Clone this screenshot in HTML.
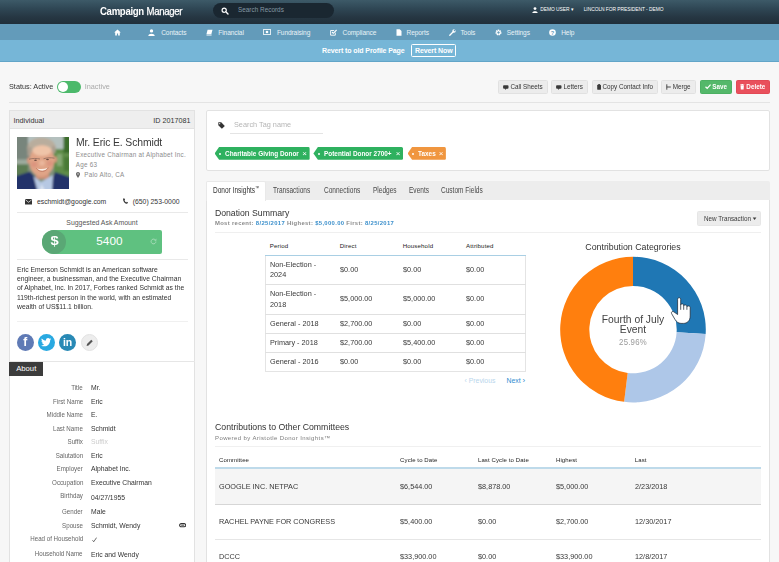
<!DOCTYPE html>
<html>
<head>
<meta charset="utf-8">
<style>
*{box-sizing:border-box;margin:0;padding:0}
html,body{width:779px;height:562px;overflow:hidden;background:#f7f7f7;font-family:"Liberation Sans",sans-serif;color:#333}
.abs{position:absolute}
#top{position:absolute;left:0;top:0;width:779px;height:24px;background:linear-gradient(#3d5a68,#2f4755 35%,#263743 70%,#202e39)}
#nav{position:absolute;left:0;top:24px;width:779px;height:16px;background:#639bba}
#sub{position:absolute;left:0;top:40px;width:779px;height:22px;background:#76b6d7;border-bottom:1px solid #62a5c8}
.t{position:absolute;white-space:nowrap;line-height:1}
#top .t,#nav .t,#sub .t{color:#fff}
#nav .t{font-size:6.6px;top:5.8px;color:#e9f2f7;letter-spacing:-0.1px}
.btn{position:absolute;top:80px;height:13.5px;border:1px solid #e1e1e1;background:#ececec;border-radius:1.5px;font-size:6.3px;line-height:11.5px;color:#333;white-space:nowrap;text-align:center}
.panel{position:absolute;background:#fff;border:1px solid #e2e2e2;border-radius:2px}
.hr{position:absolute;height:1px;background:#e9e9e9}
.lab{position:absolute;right:696px;font-size:6.8px;color:#666;white-space:nowrap;line-height:1;transform-origin:100% 50%;transform:scaleX(0.91)}
.val{position:absolute;left:91.4px;font-size:7.5px;color:#333;white-space:nowrap;line-height:1;transform-origin:0 50%;transform:scaleX(0.905)}
.tab{position:absolute;top:186.3px;font-size:9px;color:#4a4a4a;white-space:nowrap;line-height:1;transform-origin:0 50%;transform:scaleX(0.726)}
.th{position:absolute;font-size:5.6px;color:#222;white-space:nowrap;line-height:1;letter-spacing:0.15px}
.td{position:absolute;font-size:8.1px;color:#383838;white-space:nowrap;line-height:1;transform-origin:0 50%;transform:scaleX(0.90)}
.tag{position:absolute;top:147px;height:12.8px;color:#fff;font-weight:bold;font-size:7px;line-height:13.2px;white-space:nowrap}
</style>
</head>
<body>
<div id="w" style="position:absolute;left:0;top:0;width:779px;height:562px;filter:blur(0.32px)">
<div id="top">
  <div class="t" style="left:100px;top:7px;font-size:10.4px;font-weight:bold;letter-spacing:-0.35px;transform-origin:0 50%;transform:scaleX(0.925)">Campaign <span style="font-weight:normal;margin-left:0.3px;-webkit-text-stroke:0.25px #fff">Manager</span></div>
  <div class="abs" style="left:212.5px;top:3px;width:121px;height:14.5px;border-radius:8px;background:#1a2731"></div>
  <svg class="abs" style="left:220.800px;top:6.500px" width="8" height="8" viewBox="0 0 8 8"><circle cx="3.2" cy="3.2" r="2.1" fill="none" stroke="#fff" stroke-width="1.2"/><path d="M4.8 4.8 L7 7" stroke="#fff" stroke-width="1.4" stroke-linecap="round"/></svg>
  <div class="t" style="left:238px;top:7.3px;font-size:6.4px;color:#8597a3">Search Records</div>
  <svg class="abs" style="left:532px;top:7px" width="6" height="6" viewBox="0 0 6 6"><circle cx="3" cy="1.6" r="1.4" fill="#fff"/><path d="M0.3 6 C0.3 3.6 5.7 3.6 5.7 6Z" fill="#fff"/></svg>
  <div class="t" style="left:540.3px;top:8.3px;font-size:4.9px;letter-spacing:-0.05px">DEMO USER ▾</div>
  <div class="t" style="left:583.7px;top:8.3px;font-size:4.9px;letter-spacing:-0.05px">LINCOLN FOR PRESIDENT - DEMO</div>
</div>
<div id="nav">
  <svg class="abs" style="left:113.5px;top:4.5px" width="7" height="7" viewBox="0 0 7 7"><path d="M3.5 0.6 L0.2 3.6 H1.2 V6.5 H2.9 V4.5 H4.1 V6.5 H5.8 V3.6 H6.8 Z" fill="#fff"/></svg>
  <svg class="abs" style="left:148px;top:4.5px" width="7" height="7" viewBox="0 0 7 7"><circle cx="3.5" cy="1.9" r="1.7" fill="#fff"/><path d="M0.3 7 C0.3 3.9 6.7 3.9 6.7 7Z" fill="#fff"/></svg>
  <div class="t" style="left:161.2px">Contacts</div>
  <svg class="abs" style="left:206px;top:4.5px" width="7" height="7" viewBox="0 0 7 7"><path d="M1.6 0.8 H6.5 L5.4 5 H0.5 Z M0.5 5.6 H5.6 V6.4 H0.5Z" fill="#fff"/></svg>
  <div class="t" style="left:218.3px">Financial</div>
  <svg class="abs" style="left:263px;top:5px" width="8" height="6" viewBox="0 0 8 6"><rect x="0.4" y="0.6" width="7.2" height="4.8" fill="none" stroke="#fff" stroke-width="0.8"/><circle cx="4" cy="3" r="1.3" fill="#fff"/></svg>
  <div class="t" style="left:276.9px">Fundraising</div>
  <svg class="abs" style="left:330px;top:4.5px" width="7" height="7" viewBox="0 0 7 7"><path d="M5.3 3.6 V6.2 H0.6 V1.5 H4.2" fill="none" stroke="#fff" stroke-width="0.9"/><path d="M2 3 L3.3 4.3 L6.6 1" fill="none" stroke="#fff" stroke-width="1.1"/></svg>
  <div class="t" style="left:342.5px">Compliance</div>
  <svg class="abs" style="left:396px;top:4.5px" width="6" height="7" viewBox="0 0 6 7"><path d="M0.5 0.3 H3.7 L5.5 2.1 V6.7 H0.5 Z" fill="#fff"/></svg>
  <div class="t" style="left:406.5px">Reports</div>
  <svg class="abs" style="left:448.5px;top:4.5px" width="7" height="7" viewBox="0 0 7 7"><path d="M0.8 6.2 L4 3" stroke="#fff" stroke-width="1.3" stroke-linecap="round"/><circle cx="5" cy="2" r="1.7" fill="#fff"/><path d="M5 2 L7 0" stroke="#639bba" stroke-width="1.1"/></svg>
  <div class="t" style="left:460.4px">Tools</div>
  <svg class="abs" style="left:495px;top:4.5px" width="7" height="7" viewBox="0 0 7 7"><circle cx="3.5" cy="3.5" r="2.2" fill="none" stroke="#fff" stroke-width="1.6" stroke-dasharray="1.2 0.55"/><circle cx="3.5" cy="3.5" r="1.7" fill="none" stroke="#fff" stroke-width="1"/></svg>
  <div class="t" style="left:506.8px">Settings</div>
  <svg class="abs" style="left:549px;top:4.5px" width="7" height="7" viewBox="0 0 7 7"><circle cx="3.5" cy="3.5" r="3.3" fill="#fff"/><text x="3.5" y="5.6" font-size="5.6" font-weight="bold" text-anchor="middle" fill="#639bba" font-family="Liberation Sans">?</text></svg>
  <div class="t" style="left:561.2px">Help</div>
</div>
<div id="sub">
  <div class="t" style="left:322px;top:7px;font-size:7px;font-weight:bold;letter-spacing:-0.1px">Revert to old Profile Page</div>
  <div class="abs" style="left:411px;top:4.4px;width:45px;height:13px;border:1px solid #fff;border-radius:1.5px"></div>
  <div class="t" style="left:415px;top:7px;font-size:7px;font-weight:bold;letter-spacing:-0.1px">Revert Now</div>
</div>

<!-- status row -->
<div class="t" style="left:9px;top:83.3px;font-size:7.3px;color:#333">Status: Active</div>
<div class="abs" style="left:56.5px;top:81px;width:24.6px;height:12.4px;border-radius:7px;background:#4cb96b"></div>
<div class="abs" style="left:57.8px;top:82.2px;width:10px;height:10px;border-radius:5px;background:#fff"></div>
<div class="t" style="left:84.7px;top:83.3px;font-size:7.3px;color:#aaa">Inactive</div>
<div class="hr" style="left:9px;top:102px;width:761px;background:#e4e4e4"></div>

<!-- action buttons -->
<div class="btn" style="left:498.2px;width:49.7px"><svg width="5.6" height="5" viewBox="0 0 5.600 5" style="vertical-align:-0.6px;margin-right:1.6px"><path d="M1 0.2 H4.6 C5.2 0.2 5.5 0.6 5.5 1.100 V2.800 C5.5 3.300 5.2 3.700 4.600 3.700 H3.400 L2.200 4.900 V3.700 H1 C0.400 3.700 0.100 3.300 0.100 2.800 V1.100 C0.100 0.600 0.400 0.200 1 0.200Z" fill="#3a3a3a"/></svg>Call Sheets</div>
<div class="btn" style="left:551.2px;width:36.8px"><svg width="5.6" height="5" viewBox="0 0 5.600 5" style="vertical-align:-0.6px;margin-right:1.6px"><path d="M1 0.2 H4.6 C5.2 0.2 5.5 0.6 5.5 1.100 V2.800 C5.5 3.300 5.2 3.700 4.600 3.700 H3.400 L2.200 4.900 V3.700 H1 C0.400 3.700 0.100 3.300 0.100 2.800 V1.100 C0.100 0.600 0.400 0.200 1 0.200Z" fill="#3a3a3a"/></svg>Letters</div>
<div class="btn" style="left:592px;width:65.700px"><svg width="4.2" height="6" viewBox="0 0 4.200 6" style="vertical-align:-0.9px;margin-right:1.600px"><rect x="0.200" y="0.700" width="3.800" height="5.100" rx="0.500" fill="#3a3a3a"/><rect x="1.200" y="0" width="1.800" height="1.400" rx="0.400" fill="#3a3a3a"/></svg>Copy Contact Info</div>
<div class="btn" style="left:661px;width:35px"><svg width="5" height="6" viewBox="0 0 5 6" style="vertical-align:-0.9px;margin-right:1.4px"><path d="M0.800 0.300 V5.700 M0.800 3 H4.800" stroke="#3a3a3a" stroke-width="0.9" fill="none"/></svg>Merge</div>
<div class="btn" style="left:700px;width:32px;background:#54b86a;border-color:#4cb062;color:#fff;font-weight:bold"><svg width="6" height="5.2" viewBox="0 0 6 5.200" style="vertical-align:-0.5px;margin-right:1.4px"><path d="M0.500 2.800 L2.200 4.500 L5.600 0.600" stroke="#fff" stroke-width="1.200" fill="none"/></svg>Save</div>
<div class="btn" style="left:735.6px;width:34.4px;background:#e9505c;border-color:#e24955;color:#fff;font-weight:bold"><svg width="4.4" height="5.6" viewBox="0 0 4.400 5.600" style="vertical-align:-0.7px;margin-right:1.6px"><path d="M0.500 1.300 H3.900 L3.600 5.500 H0.800Z M0.100 0.500 H4.300 V1 H0.100Z M1.500 0 H2.900 V0.500 H1.500Z" fill="#fff"/></svg>Delete</div>

<!-- left panel -->
<div class="panel" style="left:9px;top:110px;width:186px;height:470px;border-radius:0"></div>
<div class="abs" style="left:9px;top:110px;width:186px;height:19px;background:#eeeeee;border:1px solid #e2e2e2"></div>
<div class="t" style="left:13.5px;top:116.5px;font-size:7.25px;color:#333">Individual</div>
<div class="t" style="right:588.5px;top:116.5px;font-size:7.2px;color:#333">ID 2017081</div>

<!-- photo -->
<svg class="abs" style="left:17px;top:137px" width="52" height="52" viewBox="0 0 52 52">
  <defs><filter id="bl" x="-10%" y="-10%" width="120%" height="120%"><feGaussianBlur stdDeviation="0.9"/></filter><filter id="bl2"><feGaussianBlur stdDeviation="0.5"/></filter><clipPath id="cp"><rect width="52" height="52"/></clipPath></defs>
  <g clip-path="url(#cp)"><g filter="url(#bl)">
  <rect x="-4" y="-4" width="60" height="60" fill="#7f917a"/>
  <rect x="-4" y="-4" width="17" height="27" fill="#78857c"/>
  <rect x="11" y="-4" width="37" height="19" fill="#b4c0be"/>
  <rect x="37" y="12" width="20" height="28" fill="#5f8c48"/>
  <rect x="46.500" y="-4" width="12" height="20" fill="#3a6c29"/>
  <rect x="40" y="17" width="5" height="12" fill="#86a873"/>
  <rect x="47" y="20" width="6" height="14" fill="#4a7a36"/>
  <rect x="-4" y="22.500" width="15" height="5" fill="#9dab9e"/>
  <rect x="-4" y="27.500" width="15" height="12" fill="#5b7b52"/>
  <ellipse cx="24.500" cy="11" rx="14.200" ry="10.500" fill="#b9ad9d"/>
  <rect x="10.500" y="10" width="4" height="9" fill="#ab9e8f"/>
  <rect x="35" y="9" width="3.500" height="7" fill="#ab9e8f"/>
  <rect x="19" y="32" width="13" height="10" fill="#cf9277"/>
  <ellipse cx="11.800" cy="23.500" rx="1.800" ry="3.300" fill="#d4957b"/>
  <ellipse cx="38.200" cy="22.500" rx="1.800" ry="3.300" fill="#d4957b"/>
  <ellipse cx="24.800" cy="24" rx="12.500" ry="15.500" fill="#e0a487" transform="rotate(4 24.800 24)"/>
  <ellipse cx="25" cy="13.500" rx="9.500" ry="5.200" fill="#efc4a8"/>
  <ellipse cx="17" cy="27.500" rx="3.200" ry="3" fill="#dc957f"/>
  <ellipse cx="33" cy="26.500" rx="3.200" ry="3" fill="#dc957f"/>
  <ellipse cx="25" cy="26" rx="2.600" ry="2.800" fill="#eab79c"/>
  <path d="M-4 40 L13 34.500 L21 43 L27 56 H-4Z" fill="#21336a"/>
  <path d="M56 41 L38 35 L34 45 L31 56 H56Z" fill="#21336a"/>
  <path d="M16.500 39 L24 45 L36 38 L35 56 H21Z" fill="#b6c8e3"/>
  <path d="M22 56 L24.500 47 L29 56Z" fill="#dbe3f0"/>
  </g>
  <g filter="url(#bl2)">
  <path d="M12 22.200 C16 21.200 19.500 21.300 23 22 M26.500 21.800 C30 20.600 34 20.500 37.500 21.200" stroke="#8e6b5d" stroke-width="0.800" fill="none"/>
  <ellipse cx="18.500" cy="23.200" rx="1.400" ry="0.700" fill="#6d4d42"/>
  <ellipse cx="30.500" cy="22.500" rx="1.400" ry="0.700" fill="#6d4d42"/>
  <path d="M20 31.500 C22.500 34.500 28 34.500 30.800 31 C27 32.200 23.500 32.400 20 31.500Z" fill="#faeee6"/>
  <path d="M19.300 31.200 C22.300 35.600 28.500 35.500 31.400 30.600" stroke="#b8705d" stroke-width="0.700" fill="none"/>
  </g></g>
</svg>
<div class="t" style="left:75.6px;top:137.2px;font-size:10.9px;color:#3a3a3a;letter-spacing:-0.13px;transform-origin:0 50%;transform:scaleX(0.955)">Mr. Eric E. Schmidt</div>
<div class="t" style="left:75.7px;top:151.9px;font-size:6.3px;color:#8c8c8c;letter-spacing:0.25px">Executive Chairman at Alphabet Inc.</div>
<div class="t" style="left:75.7px;top:162px;font-size:6.3px;color:#8c8c8c;letter-spacing:0.25px">Age 63</div>
<svg class="abs" style="left:76.3px;top:171.8px" width="4" height="6" viewBox="0 0 4 6"><path d="M2 0 C0.8 0 0 0.9 0 2 C0 3.3 2 6 2 6 C2 6 4 3.3 4 2 C4 0.9 3.2 0 2 0Z" fill="#666"/><circle cx="2" cy="1.9" r="0.7" fill="#fff"/></svg>
<div class="t" style="left:84.2px;top:172px;font-size:6.3px;color:#8c8c8c;letter-spacing:0.25px">Palo Alto, CA</div>

<svg class="abs" style="left:25.2px;top:199px" width="7.2" height="5.6" viewBox="0 0 7.2 5.6"><rect width="7.2" height="5.6" rx="0.6" fill="#333"/><path d="M0.4 0.7 L3.6 3.3 L6.8 0.7" stroke="#fff" stroke-width="0.7" fill="none"/></svg>
<div class="t" style="left:37px;top:199px;font-size:6.8px;color:#333">eschmidt@google.com</div>
<svg class="abs" style="left:123px;top:198.4px" width="5" height="6" viewBox="0 0 5 6"><path d="M1.2 0.3 L2.1 1.8 L1.5 2.5 C1.9 3.4 2.5 4 3.3 4.4 L3.9 3.7 L5 4.6 C4.6 5.8 3.6 6 2.6 5.5 C1.2 4.8 0.1 3 0.1 1.6 C0.1 0.8 0.5 0.3 1.2 0.3Z" fill="#333"/></svg>
<div class="t" style="left:132.7px;top:199px;font-size:6.85px;color:#333">(650) 253-0000</div>
<div class="hr" style="left:17px;top:212.3px;width:171px"></div>
<div class="t" style="left:9px;width:186px;text-align:center;top:220.1px;font-size:6.9px;color:#555">Suggested Ask Amount</div>
<div class="abs" style="left:42.4px;top:230.1px;width:119.6px;height:23.7px;background:#5fc180;border-radius:12px 2px 2px 12px"></div>
<div class="abs" style="left:42.3px;top:230px;width:23.8px;height:23.8px;background:#5aa775;border-radius:12px"></div>
<div class="t" style="left:42.6px;width:23.4px;text-align:center;top:235.3px;font-size:12.8px;font-weight:bold;color:#fff;transform:scaleX(1.15)">$</div>
<div class="t" style="left:96.3px;top:236.3px;font-size:11.8px;color:#fff">5400</div>
<svg class="abs" style="left:150px;top:238.3px" width="7" height="7" viewBox="0 0 7 7"><path d="M5.9 3.5 A2.4 2.4 0 1 1 5.2 1.8" fill="none" stroke="#a5dcb7" stroke-width="1"/><path d="M6.4 0.6 V2.8 H4.2Z" fill="#a5dcb7"/></svg>
<div class="hr" style="left:17px;top:259.3px;width:171px"></div>
<div class="abs" style="left:17.2px;top:264.800px;width:200px;font-size:7.45px;line-height:9.25px;color:#333;transform-origin:0 50%;transform:scaleX(0.911)">Eric Emerson Schmidt is an American software<br>engineer, a businessman, and the Executive Chairman<br>of Alphabet, Inc. In 2017, Forbes ranked Schmidt as the<br>119th-richest person in the world, with an estimated<br>wealth of US$11.1 billion.</div>
<div class="hr" style="left:17px;top:321.3px;width:171px;background:#f0f0f0"></div>
<!-- social -->
<div class="abs" style="left:17px;top:333.9px;width:16.7px;height:16.7px;border-radius:9px;background:#5f7ab5"></div>
<div class="t" style="left:17px;width:16.7px;text-align:center;top:336.3px;font-size:12px;font-weight:bold;color:#fff">f</div>
<div class="abs" style="left:38px;top:333.9px;width:16.7px;height:16.7px;border-radius:9px;background:#29a9e1"></div>
<svg class="abs" style="left:41.2px;top:338px" width="10.4" height="8.6" viewBox="0 0 24 20"><path d="M23.6 2.4c-.9.4-1.8.6-2.8.8 1-.6 1.800-1.600 2.100-2.700-.9.600-2 1-3.100 1.200C18.900.7 17.700.1 16.300.1c-2.700 0-4.800 2.200-4.800 4.800 0 .4 0 .800.100 1.100C7.600 5.800 4 3.900 1.700.9c-.4.700-.7 1.600-.7 2.500 0 1.700.9 3.200 2.200 4-.800 0-1.600-.2-2.200-.6v.1c0 2.400 1.700 4.300 3.900 4.800-.4.100-.8.200-1.300.2-.3 0-.6 0-.9-.1.600 1.900 2.400 3.300 4.500 3.400-1.700 1.300-3.800 2.100-6 2.100-.4 0-.800 0-1.200-.1 2.200 1.400 4.700 2.200 7.400 2.200 8.900 0 13.800-7.400 13.800-13.800v-.6c.9-.7 1.700-1.600 2.400-2.600z" fill="#fff"/></svg>
<div class="abs" style="left:59px;top:333.9px;width:16.9px;height:16.9px;border-radius:9px;background:#2889b5"></div>
<div class="t" style="left:59px;width:16.9px;text-align:center;top:336.800px;font-size:10.5px;font-weight:bold;color:#fff;letter-spacing:-0.2px">in</div>
<div class="abs" style="left:80.6px;top:333.5px;width:17.4px;height:17.4px;border-radius:9px;background:#ededed;border:1px solid #e2e2e2"></div>
<svg class="abs" style="left:85.5px;top:338.5px" width="7.5" height="7.5" viewBox="0 0 8 8"><path d="M0.6 7.4 L1.1 5.3 L5.6 0.8 L7.2 2.4 L2.7 6.9 Z" fill="#555"/></svg>

<div class="hr" style="left:9px;top:361.3px;width:186px;background:#e6e6e6"></div>
<div class="abs" style="left:9px;top:362px;width:34px;height:14px;background:#3c3c3c"></div>
<div class="t" style="left:16.2px;top:365px;font-size:7.7px;color:#fff">About</div>

<!-- about fields -->
<div id="about">
<div class="lab" style="top:384.9px">Title</div>
<div class="val" style="top:383.9px">Mr.</div>
<div class="lab" style="top:399.0px">First Name</div>
<div class="val" style="top:397.9px">Eric</div>
<div class="lab" style="top:412.3px">Middle Name</div>
<div class="val" style="top:411.4px">E.</div>
<div class="lab" style="top:425.9px">Last Name</div>
<div class="val" style="top:424.7px">Schmidt</div>
<div class="lab" style="top:439.4px">Suffix</div>
<div class="val" style="top:438.4px;color:#ccc">Suffix</div>
<div class="lab" style="top:452.5px">Salutation</div>
<div class="val" style="top:451.8px">Eric</div>
<div class="lab" style="top:466.3px">Employer</div>
<div class="val" style="top:465.4px">Alphabet Inc.</div>
<div class="lab" style="top:479.8px">Occupation</div>
<div class="val" style="top:478.9px">Executive Chairman</div>
<div class="lab" style="top:492.8px">Birthday</div>
<div class="val" style="top:493.7px">04/27/1955</div>
<div class="lab" style="top:508.7px">Gender</div>
<div class="val" style="top:508.1px">Male</div>
<div class="lab" style="top:523.1px">Spouse</div>
<div class="val" style="top:522.0px">Schmidt, Wendy</div>
<div class="lab" style="top:536.2px">Head of Household</div>
<svg class="abs" style="left:91.8px;top:536.5px" width="5" height="5.6" viewBox="0 0 5 5.6"><path d="M0.5 3.2 L1.7 4.8 L4.6 0.6" fill="none" stroke="#555" stroke-width="0.85"/></svg>
<div class="lab" style="top:551.2px">Household Name</div>
<div class="val" style="top:550.6px">Eric and Wendy</div>
<svg class="abs" style="left:178.8px;top:523.3px" width="7.4" height="4.4" viewBox="0 0 7.4 4.4"><rect x="0.6" y="0.6" width="6.2" height="3.2" rx="1.6" fill="none" stroke="#333" stroke-width="1.1"/><path d="M2.2 2.2H5.2" stroke="#333" stroke-width="0.9"/></svg>
</div><!--/about-->

<!-- right: tags -->
<div class="panel" style="left:205.7px;top:110px;width:564.2px;height:61px"></div>
<svg class="abs" style="left:218px;top:121.5px" width="7" height="7" viewBox="0 0 7 7"><path d="M0.3 0.3 H3.2 L6.8 3.9 L3.9 6.8 L0.3 3.2Z" fill="#333"/><circle cx="1.7" cy="1.7" r="0.6" fill="#fff"/></svg>
<div class="t" style="left:233.8px;top:121.2px;font-size:7.9px;color:#b5b5b5;transform-origin:0 50%;transform:scaleX(0.925)">Search Tag name</div>
<div class="hr" style="left:230.3px;top:132.8px;width:92.4px;background:#e4e4e4"></div>
<div id="tags">
<div class="tag" style="left:214.6px;width:95.0px;background:#2fb15f;clip-path:polygon(4.5px 0,100% 0,100% 100%,4.5px 100%,0 50%);border-radius:0 1.5px 1.5px 0"><span style="position:absolute;left:4.3px;top:5.6px;width:2px;height:2px;border-radius:1px;background:#fff"></span><span style="position:absolute;left:10.3px;top:0;transform-origin:0 50%;transform:scaleX(0.917)">Charitable Giving Donor</span><span style="position:absolute;right:2.600px;top:-0.3px;font-size:8px;font-weight:normal">×</span></div>
<div class="tag" style="left:313.4px;width:89.7px;background:#2fb15f;clip-path:polygon(4.5px 0,100% 0,100% 100%,4.5px 100%,0 50%);border-radius:0 1.5px 1.5px 0"><span style="position:absolute;left:4.3px;top:5.6px;width:2px;height:2px;border-radius:1px;background:#fff"></span><span style="position:absolute;left:10.3px;top:0;transform-origin:0 50%;transform:scaleX(0.917)">Potential Donor 2700+</span><span style="position:absolute;right:2.600px;top:-0.3px;font-size:8px;font-weight:normal">×</span></div>
<div class="tag" style="left:407.6px;width:38.3px;background:#f0963f;clip-path:polygon(4.5px 0,100% 0,100% 100%,4.5px 100%,0 50%);border-radius:0 1.5px 1.5px 0"><span style="position:absolute;left:4.3px;top:5.6px;width:2px;height:2px;border-radius:1px;background:#fff"></span><span style="position:absolute;left:10.3px;top:0;transform-origin:0 50%;transform:scaleX(0.917)">Taxes</span><span style="position:absolute;right:2.600px;top:-0.3px;font-size:8px;font-weight:normal">×</span></div>
</div><!--/tags-->

<!-- tabs -->
<div class="abs" style="left:206px;top:181px;width:563.8px;height:18.600px;background:#ededed;border-radius:2px 2px 0 0"></div>
<div class="panel" style="left:205.7px;top:199.5px;width:564.2px;height:380px;border-radius:0;border-top:none"></div>
<div class="abs" style="left:206.4px;top:181px;width:59.2px;height:20px;background:#fff;border:1px solid #e9e9e9;border-bottom:none;border-radius:2px 2px 0 0"></div>
<div class="tab" style="left:213.4px;color:#333">Donor Insights<span style="font-size:5.5px;position:relative;top:-3px;line-height:0">™</span></div>
<div class="tab" style="left:273.2px">Transactions</div>
<div class="tab" style="left:323.7px">Connections</div>
<div class="tab" style="left:372.8px">Pledges</div>
<div class="tab" style="left:408.8px">Events</div>
<div class="tab" style="left:441.4px">Custom Fields</div>

<div class="t" style="left:214.9px;top:208.9px;font-size:8.7px;color:#333">Donation Summary</div>
<div class="t" style="left:214.9px;top:220.8px;font-size:5.9px;font-weight:bold;color:#8a8a8a;letter-spacing:0.33px">Most recent: <span style="color:#3b8fcb">8/25/2017</span> Highest: <span style="color:#3b8fcb">$5,000.00</span> First: <span style="color:#3b8fcb">8/25/2017</span></div>
<div class="abs" style="left:697px;top:211px;width:64px;height:14.6px;background:#ececec;border:1px solid #e6e6e6;border-radius:1.5px"></div>
<div class="t" style="left:704px;top:215.3px;font-size:7px;color:#3a3a3a;transform-origin:0 50%;transform:scaleX(0.9)">New Transaction <span style="font-size:4.6px;vertical-align:1px;display:inline-block;transform:scaleX(1.5)">▼</span></div>
<div class="hr" style="left:214.9px;top:232.3px;width:546.4px;background:#efefef"></div>

<div id="tbl">
<div class="th" style="left:269.8px;top:243.4px;font-size:6.1px">Period</div>
<div class="th" style="left:339.8px;top:243.4px;font-size:6.1px">Direct</div>
<div class="th" style="left:402.7px;top:243.4px;font-size:6.1px">Household</div>
<div class="th" style="left:466.0px;top:243.4px;font-size:6.1px">Attributed</div>
<div class="abs" style="left:264.7px;top:255px;width:261.2px;height:1px;background:#a9cfe4"></div>
<div class="abs" style="left:264.7px;top:256px;width:261.2px;height:116px;border:1px solid #e4e4e4;border-top:none"></div>
<div class="abs" style="left:264.7px;top:284.1px;width:261.2px;height:1px;background:#e0e0e0"></div>
<div class="abs" style="left:264.7px;top:313.9px;width:261.2px;height:1px;background:#e0e0e0"></div>
<div class="abs" style="left:264.7px;top:332.9px;width:261.2px;height:1px;background:#e0e0e0"></div>
<div class="abs" style="left:264.7px;top:352.0px;width:261.2px;height:1px;background:#e0e0e0"></div>
<div class="td" style="left:269.8px;top:260.6px">Non-Election -</div>
<div class="td" style="left:269.8px;top:271.2px">2024</div>
<div class="td" style="left:339.8px;top:265.8px">$0.00</div>
<div class="td" style="left:402.7px;top:265.8px">$0.00</div>
<div class="td" style="left:466.0px;top:265.8px">$0.00</div>
<div class="td" style="left:269.8px;top:290.1px">Non-Election -</div>
<div class="td" style="left:269.8px;top:300.6px">2018</div>
<div class="td" style="left:339.8px;top:295.2px">$5,000.00</div>
<div class="td" style="left:402.7px;top:295.2px">$5,000.00</div>
<div class="td" style="left:466.0px;top:295.2px">$0.00</div>
<div class="td" style="left:269.8px;top:319.6px">General - 2018</div>
<div class="td" style="left:339.8px;top:319.6px">$2,700.00</div>
<div class="td" style="left:402.7px;top:319.6px">$0.00</div>
<div class="td" style="left:466.0px;top:319.6px">$0.00</div>
<div class="td" style="left:269.8px;top:338.8px">Primary - 2018</div>
<div class="td" style="left:339.8px;top:338.8px">$2,700.00</div>
<div class="td" style="left:402.7px;top:338.8px">$5,400.00</div>
<div class="td" style="left:466.0px;top:338.8px">$0.00</div>
<div class="td" style="left:269.8px;top:357.8px">General - 2016</div>
<div class="td" style="left:339.8px;top:357.8px">$0.00</div>
<div class="td" style="left:402.7px;top:357.8px">$0.00</div>
<div class="td" style="left:466.0px;top:357.8px">$0.00</div>
<div class="t" style="left:464.6px;top:378.4px;font-size:6.85px;color:#b9d6ec">‹ Previous</div>
<div class="t" style="left:506.6px;top:378.4px;font-size:6.85px;color:#2c8bd0">Next <span style="font-size:8px;line-height:0">›</span></div>
</div><!--/tbl-->
<div id="donut">
<svg class="abs" style="left:0;top:0" width="779" height="562" viewBox="0 0 779 562">
<path d="M633.00 256.80 A72.8 72.8 0 0 1 705.66 334.04 L676.62 332.27 A43.7 43.7 0 0 0 633.00 285.90Z" fill="#1f77b4"/>
<path d="M705.66 334.04 A72.8 72.8 0 0 1 624.13 401.86 L627.67 372.97 A43.7 43.7 0 0 0 676.62 332.27Z" fill="#aec7e8"/>
<path d="M624.13 401.86 A72.8 72.8 0 0 1 633.00 256.80 L633.00 285.90 A43.7 43.7 0 0 0 627.67 372.97Z" fill="#ff7f0e"/>
<path d="M677.6 314.5 V299.3 C677.6 297.2 680.7 297.2 680.7 299.3 V305 C680.7 303.5 683.7 303.5 683.7 305.2 V306 C683.7 304.5 686.9 304.7 686.9 306.2 V307 C686.9 305.5 690.2 305.6 690.2 307.4 V316 C690.2 321 687 323.4 683.5 323.4 H681 C678 323.4 676.5 321.5 675 319.5 L671.6 313.6 C670.8 312 672.6 310.9 673.8 311.8 L677.6 314.5 Z" fill="#fff" stroke="#1c2836" stroke-width="0.75" stroke-linejoin="round"/><path d="M680.7 305 V309.8 M683.7 306 V309.8 M686.9 307 V309.8" stroke="#1c2836" stroke-width="0.75" fill="none"/>
</svg>
<div class="t" style="left:560px;width:146px;text-align:center;top:242.7px;font-size:8.8px;color:#333">Contribution Categrories</div>
<div class="t" style="left:560px;width:146px;text-align:center;top:315.2px;font-size:10.3px;color:#424242">Fourth of July</div>
<div class="t" style="left:560px;width:146px;text-align:center;top:325.3px;font-size:10.3px;color:#424242">Event</div>
<div class="t" style="left:560px;width:146px;text-align:center;top:338.4px;font-size:8.4px;color:#999;letter-spacing:0.25px;transform:scaleX(0.93)">25.96%</div>
</div><!--/donut-->
<div id="comm">
<div class="t" style="left:215px;top:423px;font-size:8.72px;color:#333">Contributions to Other Committees</div>
<div class="t" style="left:215px;top:434.9px;font-size:6px;color:#7d7d7d;letter-spacing:0.4px">Powered by Aristotle Donor Insights™</div>
<div class="hr" style="left:215px;top:445.8px;width:546.2px;background:#f0f0f0"></div>
<div class="th" style="left:219.1px;top:456.7px;font-size:6px;letter-spacing:0.1px">Committee</div>
<div class="th" style="left:400.1px;top:456.7px;font-size:6px;letter-spacing:0.1px">Cycle to Date</div>
<div class="th" style="left:478.0px;top:456.7px;font-size:6px;letter-spacing:0.1px">Last Cycle to Date</div>
<div class="th" style="left:556.0px;top:456.7px;font-size:6px;letter-spacing:0.1px">Highest</div>
<div class="th" style="left:634.8px;top:456.7px;font-size:6px;letter-spacing:0.1px">Last</div>
<div class="abs" style="left:215px;top:467.3px;width:546.2px;height:1.4px;background:#bedaea"></div>
<div class="abs" style="left:215px;top:468.6px;width:546.2px;height:35.2px;background:#f5f5f5"></div>
<div class="abs" style="left:215px;top:503.5px;width:546.2px;height:1.5px;background:#d6d6d6"></div>
<div class="hr" style="left:215px;top:539px;width:546.2px;background:#e6e6e6"></div>
<div class="td" style="left:219.1px;top:483.0px">GOOGLE INC. NETPAC</div>
<div class="td" style="left:400.1px;top:483.0px">$6,544.00</div>
<div class="td" style="left:478.0px;top:483.0px">$8,878.00</div>
<div class="td" style="left:556.0px;top:483.0px">$5,000.00</div>
<div class="td" style="left:634.8px;top:483.0px">2/23/2018</div>
<div class="td" style="left:219.1px;top:518.4px">RACHEL PAYNE FOR CONGRESS</div>
<div class="td" style="left:400.1px;top:518.4px">$5,400.00</div>
<div class="td" style="left:478.0px;top:518.4px">$0.00</div>
<div class="td" style="left:556.0px;top:518.4px">$2,700.00</div>
<div class="td" style="left:634.8px;top:518.4px">12/30/2017</div>
<div class="td" style="left:219.1px;top:553.4px">DCCC</div>
<div class="td" style="left:400.1px;top:553.4px">$33,900.00</div>
<div class="td" style="left:478.0px;top:553.4px">$0.00</div>
<div class="td" style="left:556.0px;top:553.4px">$33,900.00</div>
<div class="td" style="left:634.8px;top:553.4px">12/8/2017</div>
</div><!--/comm-->
</div>
</body>
</html>
